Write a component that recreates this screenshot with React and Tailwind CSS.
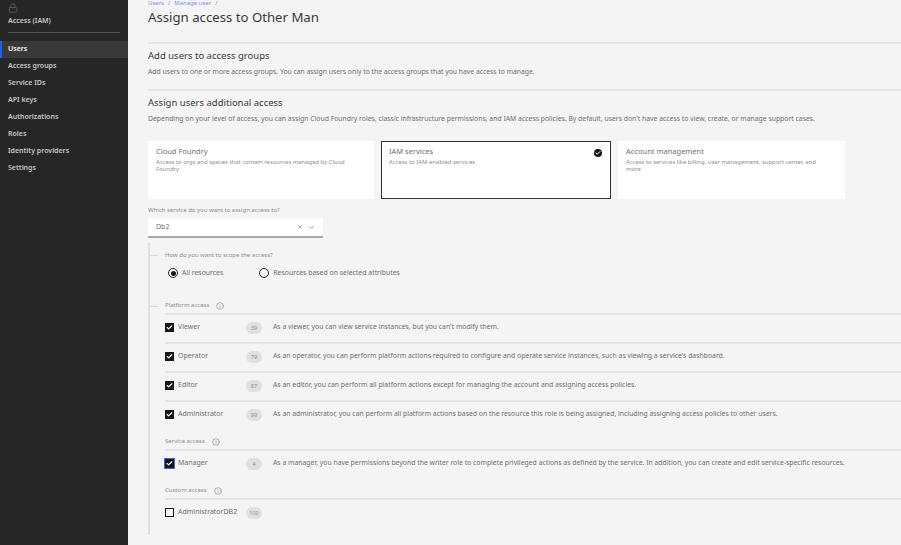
import React from 'react';
import { ChevronDown, X, Info, Lock, Check } from 'lucide-react';

const navItems = ['Users', 'Access groups', 'Service IDs', 'API keys', 'Authorizations', 'Roles', 'Identity providers', 'Settings'];

const platformRoles = [
  { name: 'Viewer', count: 39, text: "As a viewer, you can view service instances, but you can't modify them." },
  { name: 'Operator', count: 79, text: "As an operator, you can perform platform actions required to configure and operate service instances, such as viewing a service's dashboard." },
  { name: 'Editor', count: 87, text: 'As an editor, you can perform all platform actions except for managing the account and assigning access policies.' },
  { name: 'Administrator', count: 99, text: 'As an administrator, you can perform all platform actions based on the resource this role is being assigned, including assigning access policies to other users.' },
];

const Checkbox = ({ checked, focused }) => (
  <span className={`flex h-[9px] w-[9px] shrink-0 items-center justify-center border border-[#161616] ${checked ? 'bg-[#161616]' : 'bg-[#f4f4f4]'} ${focused ? 'outline-[1.5px] outline-offset-0 outline-[#2f6fed] outline-solid' : ''}`}>
    {checked && <Check className="h-[7px] w-[7px] text-white" strokeWidth={4} />}
  </span>
);

const RoleRow = ({ name, count, text, checked = true, focused = false, last = false }) => (
  <div className={`flex h-[29px] items-start pt-[7px] ${last ? '' : 'border-b-2 border-[#e4e4e4]'}`}>
    <div className="flex w-[81px] items-center gap-[4px]">
      <Checkbox checked={checked} focused={focused} />
      <span className="text-[7px] leading-[10px] text-[#6f6f6f]">{name}</span>
    </div>
    <span className="flex h-[12px] w-[16px] shrink-0 items-center justify-center rounded-full bg-[#e0e0e0] text-[5.5px] text-[#8d8d8d]">{count}</span>
    <p className="ml-[11px] text-[6.85px] leading-[10px] whitespace-nowrap text-[#6f6f6f]">{text}</p>
  </div>
);

const SectionHead = ({ label, tick }) => (
  <div className="relative flex h-[14px] items-center gap-[7px] border-b-2 border-[#e4e4e4] pb-[3px]">
    {tick && <span className="absolute -left-[15px] top-[5px] h-px w-[8px] bg-[#d8d8d8]" />}
    <span className="text-[6px] text-[#8d8d8d]">{label}</span>
    <Info className="h-[8px] w-[8px] text-[#6f6f6f]" strokeWidth={1.5} />
  </div>
);

const Card = ({ title, desc, selected, className }) => (
  <div className={`relative h-[58px] bg-white pl-[8px] pr-[24px] pt-[5px] ${selected ? 'outline outline-[1.5px] -outline-offset-[1px] outline-[#333333]' : ''} ${className}`}>
    <h3 className="text-[7.5px] leading-[10px] text-[#6f6f6f]">{title}</h3>
    <p className="mt-[3px] text-[5.9px] leading-[7px] text-[#8d8d8d]">{desc}</p>
    {selected && (
      <span className="absolute right-[9px] top-[8px] flex h-[8px] w-[8px] items-center justify-center rounded-full bg-[#161616]">
        <Check className="h-[6px] w-[6px] text-white" strokeWidth={4} />
      </span>
    )}
  </div>
);

const Radio = ({ checked, label }) => (
  <div className="flex items-center gap-[4px]">
    <span className="flex h-[10px] w-[10px] items-center justify-center rounded-full border border-[#262626]">
      {checked && <span className="h-[5px] w-[5px] rounded-full bg-[#161616]" />}
    </span>
    <span className="text-[6.9px] text-[#6f6f6f]">{label}</span>
  </div>
);

export default function App() {
  return (
    <div className="flex h-[545px] w-[901px] overflow-hidden bg-[#f4f4f4] font-['Noto_Sans',sans-serif]">
      <aside className="w-[128px] shrink-0 bg-[#262626]">
        <div className="px-[8px] pt-[3px]">
          <Lock className="h-[10px] w-[10px] text-[#6f6f6f]" strokeWidth={1.5} />
          <p className="mt-[3px] text-[7px] font-semibold leading-[10px] text-[#c6c6c6]">Access (IAM)</p>
          <div className="mt-[6px] h-px w-[112px] bg-[#525252]" />
        </div>
        <nav className="mt-[8px]">
          {navItems.map((item, i) => (
            <div
              key={item}
              className={`flex h-[17px] items-center border-l-2 pl-[6px] text-[7px] font-semibold ${i === 0 ? 'border-[#0f62fe] bg-[#393939] text-[#f4f4f4]' : 'border-transparent text-[#c6c6c6]'}`}
            >
              {item}
            </div>
          ))}
        </nav>
      </aside>

      <main className="min-w-0 flex-1 pl-[20px]">
        <div className="flex h-[6px] items-center gap-[4px] text-[6px] text-[#8d8d8d]">
          <span className="text-[#7b8ff0]">Users</span>
          <span>/</span>
          <span className="text-[#7b8ff0]">Manage user</span>
          <span>/</span>
        </div>
        <h1 className="mt-[2px] text-[13.2px] leading-[18px] text-[#393939]">Assign access to Other Man</h1>

        <section className="mt-[16px] border-t-2 border-[#e4e4e4] pt-[6px]">
          <h2 className="text-[9.5px] leading-[12px] text-[#393939]">Add users to access groups</h2>
          <p className="mt-[5px] text-[6.8px] leading-[9px] text-[#6f6f6f]">Add users to one or more access groups. You can assign users only to the access groups that you have access to manage.</p>
        </section>

        <section className="mt-[13px] border-t-2 border-[#e4e4e4] pt-[6px]">
          <h2 className="text-[9.5px] leading-[12px] text-[#393939]">Assign users additional access</h2>
          <p className="mt-[5px] whitespace-nowrap text-[6.85px] leading-[9px] text-[#6f6f6f]">Depending on your level of access, you can assign Cloud Foundry roles, classic infrastructure permissions, and IAM access policies. By default, users don't have access to view, create, or manage support cases.</p>
        </section>

        <div className="mt-[18px] flex gap-[7px]">
          <Card className="w-[226px]" title="Cloud Foundry" desc="Access to orgs and spaces that contain resources managed by Cloud Foundry" />
          <Card className="w-[230px]" title="IAM services" desc="Access to IAM-enabled services" selected />
          <Card className="w-[227px]" title="Account management" desc="Access to services like billing, user management, support center, and more" />
        </div>

        <p className="mt-[7px] text-[6px] leading-[8px] text-[#8d8d8d]">Which service do you want to assign access to?</p>
        <div className="mt-[4px] flex h-[20px] w-[175px] items-center justify-between border-b-2 border-[#a8a8a8] bg-white pl-[8px] pr-[8px]">
          <span className="text-[7px] text-[#6f6f6f]">Db2</span>
          <span className="flex items-center gap-[5px] text-[#525252]">
            <X className="h-[6px] w-[6px]" strokeWidth={2} />
            <ChevronDown className="h-[7px] w-[7px]" strokeWidth={2} />
          </span>
        </div>

        <div className="mt-[5px] h-[292px] border-l-2 border-[#e0e0e0] pl-[15px]">
          <div className="relative pt-[8px]">
            <span className="absolute -left-[15px] top-[12px] h-px w-[8px] bg-[#d8d8d8]" />
            <p className="text-[6px] leading-[8px] text-[#8d8d8d]">How do you want to scope the access?</p>
          </div>
          <div className="mt-[9px] flex gap-[36px] pl-[3px]">
            <Radio checked label="All resources" />
            <Radio label="Resources based on selected attributes" />
          </div>

          <div className="mt-[23px]">
            <SectionHead label="Platform access" tick />
            {platformRoles.map((role, i) => (
              <RoleRow key={role.name} {...role} last={i === platformRoles.length - 1} />
            ))}
          </div>
          <div className="mt-[6px]">
            <SectionHead label="Service access" />
            <RoleRow name="Manager" count={4} focused last text="As a manager, you have permissions beyond the writer role to complete privileged actions as defined by the service. In addition, you can create and edit service-specific resources." />
          </div>
          <div className="mt-[6px]">
            <SectionHead label="Custom access" />
            <RoleRow name="AdministratorDB2" count={100} checked={false} last text="" />
          </div>
        </div>
      </main>
    </div>
  );
}
